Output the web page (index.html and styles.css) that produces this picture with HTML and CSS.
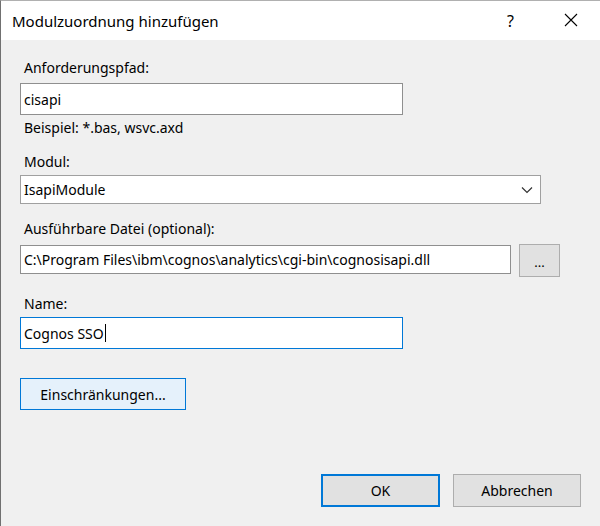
FILE: index.html
```html
<!DOCTYPE html>
<html lang="de">
<head>
<meta charset="utf-8">
<link rel="stylesheet" href="styles.css">
</head>
<body>
<div class="window">
  <div class="titlebar">
    <span class="title">Modulzuordnung hinzufügen</span>
    <span class="help">?</span>
    <span class="close">
      <svg width="14" height="14" viewBox="0 0 14 14"><path d="M1 1 L13 13 M13 1 L1 13" stroke="#000" stroke-width="1.1" fill="none"/></svg>
    </span>
  </div>
  <div class="content">
    <div class="label l1">Anforderungspfad:</div>
    <div class="input tall w1">cisapi</div>
    <div class="hint">Beispiel: *.bas, wsvc.axd</div>
    <div class="label l2">Modul:</div>
    <div class="select">
      <span>IsapiModule</span>
      <svg width="12" height="8" viewBox="0 0 12 8"><path d="M1 1.5 L6 6.5 L11 1.5" stroke="#333" stroke-width="1.2" fill="none"/></svg>
    </div>
    <div class="label l3">Ausführbare Datei (optional):</div>
    <div class="row">
      <div class="input short w3">C:\Program Files\ibm\cognos\analytics\cgi-bin\cognosisapi.dll</div>
      <div class="btn browse">...</div>
    </div>
    <div class="label l4">Name:</div>
    <div class="input tall w1 focused">Cognos SSO<span class="caret"></span></div>
    <div class="btn restr">Einschränkungen...</div>
    <div class="footer">
      <div class="btn ok">OK</div>
      <div class="btn cancel">Abbrechen</div>
    </div>
  </div>
</div>
</body>
</html>
```
FILE: styles.css
```css
html, body {
  margin: 0;
  padding: 0;
  background: #f0f0f0;
}
body {
  font-family: "Noto Sans", "Open Sans", sans-serif;
  font-size: 14px;
  color: #000;
}
.window {
  width: 600px;
  height: 526px;
  box-sizing: border-box;
  border-left: 1px solid #707070;
  border-top: 1px solid #b0b0b0;
  background: #f0f0f0;
}
.titlebar {
  height: 39px;
  background: #fff;
  display: flex;
  align-items: center;
  position: relative;
}
.title {
  margin-left: 11px;
  font-size: 15px;
  margin-top: 1px;
}
.help {
  position: absolute;
  left: 506px;
  top: 9px;
  font-size: 16px;
}
.close {
  position: absolute;
  left: 563px;
  top: 12px;
  display: flex;
}
.content {
  padding-left: 19px;
  display: flex;
  flex-direction: column;
  align-items: flex-start;
}
.label, .hint {
  line-height: 20px;
  height: 20px;
  margin-left: 4px;
  white-space: nowrap;
}
.l1 { margin-top: 18px; }
.l2 { margin-top: 14px; }
.l3 { margin-top: 15px; }
.l4 { margin-top: 17px; }
.hint { margin-top: 3px; }
.input {
  box-sizing: border-box;
  background: #fff;
  border: 1px solid #8f8f8f;
  padding-left: 3px;
  display: flex;
  align-items: center;
  white-space: nowrap;
}
.tall { height: 32px; margin-top: 5px; }
.w1 { width: 383px; }
.l4 + .input { margin-top: 3px; }
.focused { border-color: #0078d7; }
.caret {
  display: inline-block;
  width: 1px;
  height: 18px;
  background: #000;
  margin-left: 1px;
}
.select {
  box-sizing: border-box;
  margin-top: 3px;
  width: 521px;
  height: 29px;
  background: #fff;
  border: 1px solid #a0a0a0;
  display: flex;
  align-items: center;
  justify-content: space-between;
  padding: 0 7px 0 3px;
}
.row {
  display: flex;
  align-items: flex-start;
  margin-top: 5px;
}
.short { height: 29px; width: 491px; margin-top: 1px; }
.w3 { width: 491px; }
.btn {
  box-sizing: border-box;
  background: #e1e1e1;
  border: 1px solid #adadad;
  display: flex;
  align-items: center;
  justify-content: center;
  white-space: nowrap;
}
.browse {
  width: 41px;
  height: 33px;
  margin-left: 8px;
  font-size: 13px;
  padding-top: 2px;
}
.restr {
  margin-top: 29px;
  width: 166px;
  height: 32px;
  background: #e5f1fb;
  border-color: #0078d7;
}
.footer {
  margin-top: 64px;
  display: flex;
  gap: 13px;
  margin-left: 301px;
}
.ok {
  width: 119px;
  height: 33px;
  border: 2px solid #0078d7;
}
.cancel {
  width: 128px;
  height: 33px;
}
```
